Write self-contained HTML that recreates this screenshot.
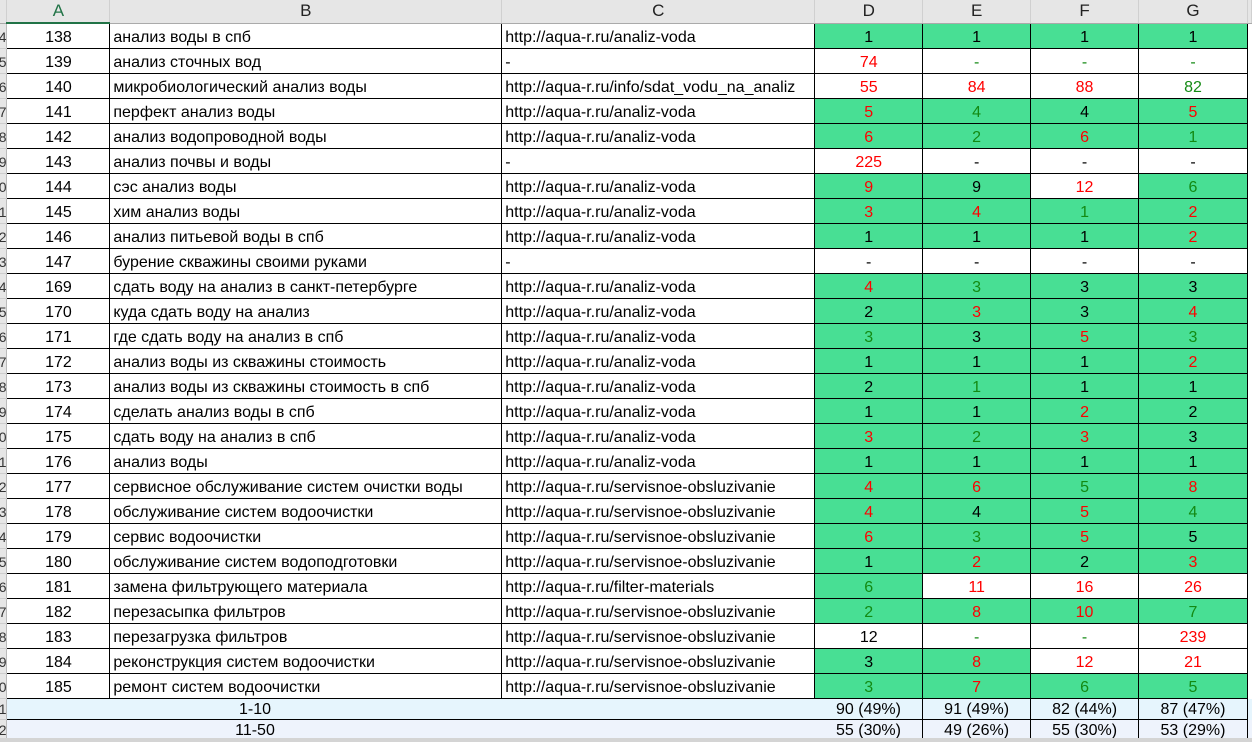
<!DOCTYPE html>
<html><head><meta charset="utf-8"><style>
html,body{margin:0;padding:0;background:#fff;width:1252px;height:742px;overflow:hidden}
body{font-family:"Liberation Sans",Arial,sans-serif;font-size:16px;color:#000;position:relative}
table{border-collapse:collapse;table-layout:fixed;position:absolute;left:0;top:0}
td{height:21px;padding:3px 0 0 0;border:1px solid #000;text-align:center;white-space:nowrap;overflow:hidden;line-height:21px;vertical-align:top}
td.b,td.c{text-align:left;padding-left:3px}
tr.h td{height:21px;padding:0;background:#e6e6e6;border:none;border-right:1px solid #d0d0d0;border-bottom:1px solid #aaa;color:#222;font-size:17px;line-height:22px}
tr.h td.sel{color:#217346;border-bottom:2px solid #217346}
td.n{background:#e6e6e6;border:none;border-right:1px solid #bbb;border-bottom:1px solid #ccc;color:#333;text-align:right;font-size:14px;text-indent:-4px}
td.x{border:none;background:#fff}
.g{background:#48df94}
.r{color:#ff0000}
.k{color:#138a13}
tr.s1 td{background:#e6f5fd;height:19px;line-height:19px;padding-top:1px}
tr.s2 td{background:#eef3fc;height:19px;line-height:19px;padding-top:1px}
tr.s1 td.n,tr.s2 td.n{background:#e6e6e6}
td.m{text-align:left;border-right:none}
td.m span{display:inline-block;width:495px;text-align:center}
td.d{border-left:none}
.bot{position:absolute;left:0;top:738px;width:1252px;height:4px;background:#d4d4d4}
</style></head><body>
<table>
<colgroup><col style="width:7px"><col style="width:103px"><col style="width:392px"><col style="width:313px"><col style="width:108px"><col style="width:108px"><col style="width:108px"><col style="width:109px"><col style="width:4px"></colgroup>
<tr class="h"><td></td><td class="sel">A</td><td>B</td><td>C</td><td>D</td><td>E</td><td>F</td><td>G</td><td></td></tr>
<tr><td class="n">4</td><td>138</td><td class="b">анализ воды в спб</td><td class="c">http://aqua-r.ru/analiz-voda</td><td class="g">1</td><td class="g">1</td><td class="g">1</td><td class="g">1</td><td class="x"></td></tr>
<tr><td class="n">5</td><td>139</td><td class="b">анализ сточных вод</td><td class="c">-</td><td class="r">74</td><td class="k">-</td><td class="k">-</td><td class="k">-</td><td class="x"></td></tr>
<tr><td class="n">6</td><td>140</td><td class="b">микробиологический анализ воды</td><td class="c">http://aqua-r.ru/info/sdat_vodu_na_analiz</td><td class="r">55</td><td class="r">84</td><td class="r">88</td><td class="k">82</td><td class="x"></td></tr>
<tr><td class="n">7</td><td>141</td><td class="b">перфект анализ воды</td><td class="c">http://aqua-r.ru/analiz-voda</td><td class="g r">5</td><td class="g k">4</td><td class="g">4</td><td class="g r">5</td><td class="x"></td></tr>
<tr><td class="n">8</td><td>142</td><td class="b">анализ водопроводной воды</td><td class="c">http://aqua-r.ru/analiz-voda</td><td class="g r">6</td><td class="g k">2</td><td class="g r">6</td><td class="g k">1</td><td class="x"></td></tr>
<tr><td class="n">9</td><td>143</td><td class="b">анализ почвы и воды</td><td class="c">-</td><td class="r">225</td><td>-</td><td>-</td><td>-</td><td class="x"></td></tr>
<tr><td class="n">0</td><td>144</td><td class="b">сэс анализ воды</td><td class="c">http://aqua-r.ru/analiz-voda</td><td class="g r">9</td><td class="g">9</td><td class="r">12</td><td class="g k">6</td><td class="x"></td></tr>
<tr><td class="n">1</td><td>145</td><td class="b">хим анализ воды</td><td class="c">http://aqua-r.ru/analiz-voda</td><td class="g r">3</td><td class="g r">4</td><td class="g k">1</td><td class="g r">2</td><td class="x"></td></tr>
<tr><td class="n">2</td><td>146</td><td class="b">анализ питьевой воды в спб</td><td class="c">http://aqua-r.ru/analiz-voda</td><td class="g">1</td><td class="g">1</td><td class="g">1</td><td class="g r">2</td><td class="x"></td></tr>
<tr><td class="n">3</td><td>147</td><td class="b">бурение скважины своими руками</td><td class="c">-</td><td>-</td><td>-</td><td>-</td><td>-</td><td class="x"></td></tr>
<tr><td class="n">4</td><td>169</td><td class="b">сдать воду на анализ в санкт-петербурге</td><td class="c">http://aqua-r.ru/analiz-voda</td><td class="g r">4</td><td class="g k">3</td><td class="g">3</td><td class="g">3</td><td class="x"></td></tr>
<tr><td class="n">5</td><td>170</td><td class="b">куда сдать воду на анализ</td><td class="c">http://aqua-r.ru/analiz-voda</td><td class="g">2</td><td class="g r">3</td><td class="g">3</td><td class="g r">4</td><td class="x"></td></tr>
<tr><td class="n">6</td><td>171</td><td class="b">где сдать воду на анализ в спб</td><td class="c">http://aqua-r.ru/analiz-voda</td><td class="g k">3</td><td class="g">3</td><td class="g r">5</td><td class="g k">3</td><td class="x"></td></tr>
<tr><td class="n">7</td><td>172</td><td class="b">анализ воды из скважины стоимость</td><td class="c">http://aqua-r.ru/analiz-voda</td><td class="g">1</td><td class="g">1</td><td class="g">1</td><td class="g r">2</td><td class="x"></td></tr>
<tr><td class="n">8</td><td>173</td><td class="b">анализ воды из скважины стоимость в спб</td><td class="c">http://aqua-r.ru/analiz-voda</td><td class="g">2</td><td class="g k">1</td><td class="g">1</td><td class="g">1</td><td class="x"></td></tr>
<tr><td class="n">9</td><td>174</td><td class="b">сделать анализ воды в спб</td><td class="c">http://aqua-r.ru/analiz-voda</td><td class="g">1</td><td class="g">1</td><td class="g r">2</td><td class="g">2</td><td class="x"></td></tr>
<tr><td class="n">0</td><td>175</td><td class="b">сдать воду на анализ в спб</td><td class="c">http://aqua-r.ru/analiz-voda</td><td class="g r">3</td><td class="g k">2</td><td class="g r">3</td><td class="g">3</td><td class="x"></td></tr>
<tr><td class="n">1</td><td>176</td><td class="b">анализ воды</td><td class="c">http://aqua-r.ru/analiz-voda</td><td class="g">1</td><td class="g">1</td><td class="g">1</td><td class="g">1</td><td class="x"></td></tr>
<tr><td class="n">2</td><td>177</td><td class="b">сервисное обслуживание систем очистки воды</td><td class="c">http://aqua-r.ru/servisnoe-obsluzivanie</td><td class="g r">4</td><td class="g r">6</td><td class="g k">5</td><td class="g r">8</td><td class="x"></td></tr>
<tr><td class="n">3</td><td>178</td><td class="b">обслуживание систем водоочистки</td><td class="c">http://aqua-r.ru/servisnoe-obsluzivanie</td><td class="g r">4</td><td class="g">4</td><td class="g r">5</td><td class="g k">4</td><td class="x"></td></tr>
<tr><td class="n">4</td><td>179</td><td class="b">сервис водоочистки</td><td class="c">http://aqua-r.ru/servisnoe-obsluzivanie</td><td class="g r">6</td><td class="g k">3</td><td class="g r">5</td><td class="g">5</td><td class="x"></td></tr>
<tr><td class="n">5</td><td>180</td><td class="b">обслуживание систем водоподготовки</td><td class="c">http://aqua-r.ru/servisnoe-obsluzivanie</td><td class="g">1</td><td class="g r">2</td><td class="g">2</td><td class="g r">3</td><td class="x"></td></tr>
<tr><td class="n">6</td><td>181</td><td class="b">замена фильтрующего материала</td><td class="c">http://aqua-r.ru/filter-materials</td><td class="g k">6</td><td class="r">11</td><td class="r">16</td><td class="r">26</td><td class="x"></td></tr>
<tr><td class="n">7</td><td>182</td><td class="b">перезасыпка фильтров</td><td class="c">http://aqua-r.ru/servisnoe-obsluzivanie</td><td class="g k">2</td><td class="g r">8</td><td class="g r">10</td><td class="g k">7</td><td class="x"></td></tr>
<tr><td class="n">8</td><td>183</td><td class="b">перезагрузка фильтров</td><td class="c">http://aqua-r.ru/servisnoe-obsluzivanie</td><td>12</td><td class="k">-</td><td class="k">-</td><td class="r">239</td><td class="x"></td></tr>
<tr><td class="n">9</td><td>184</td><td class="b">реконструкция систем водоочистки</td><td class="c">http://aqua-r.ru/servisnoe-obsluzivanie</td><td class="g">3</td><td class="g r">8</td><td class="r">12</td><td class="r">21</td><td class="x"></td></tr>
<tr><td class="n">0</td><td>185</td><td class="b">ремонт систем водоочистки</td><td class="c">http://aqua-r.ru/servisnoe-obsluzivanie</td><td class="g k">3</td><td class="g r">7</td><td class="g k">6</td><td class="g k">5</td><td class="x"></td></tr>
<tr class="s1"><td class="n">1</td><td colspan="3" class="m"><span>1-10</span></td><td class="d">90 (49%)</td><td>91 (49%)</td><td>82 (44%)</td><td>87 (47%)</td><td class="x"></td></tr>
<tr class="s2"><td class="n">2</td><td colspan="3" class="m"><span>11-50</span></td><td class="d">55 (30%)</td><td>49 (26%)</td><td>55 (30%)</td><td>53 (29%)</td><td class="x"></td></tr>
</table>
<div class="bot"></div>
</body></html>
